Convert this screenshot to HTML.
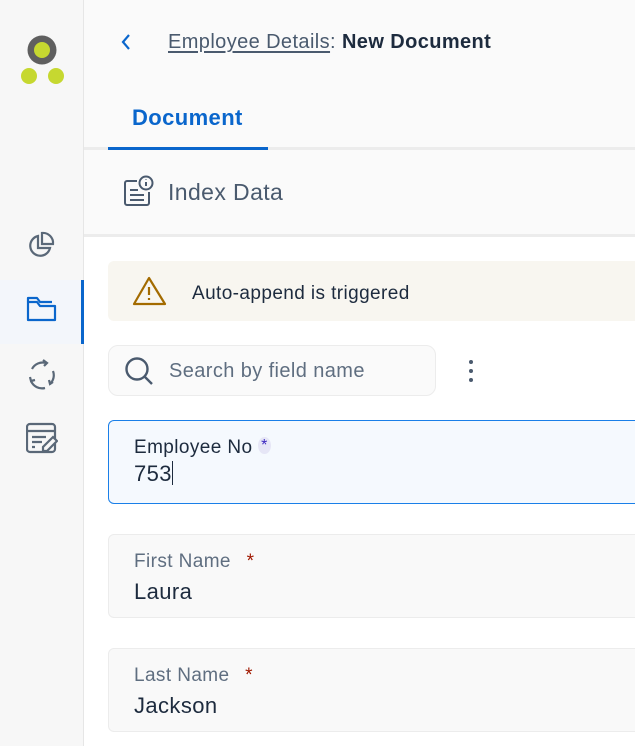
<!DOCTYPE html>
<html><head><meta charset="utf-8"><style>
*{box-sizing:border-box;margin:0;padding:0}
body{width:635px;height:746px;overflow:hidden;background:#fff;font-family:"Liberation Sans",sans-serif;position:relative;color:#1d2b3e;letter-spacing:0.4px}
.side{position:absolute;left:0;top:0;width:84px;height:746px;background:#f7f7f7;border-right:1px solid #e6e6e6}
.abs{position:absolute}
.top{position:absolute;left:84px;top:0;right:0;height:236px;background:#fafafa}
.field{position:absolute;left:108px;width:540px;height:84px;border:1px solid #ececec;border-radius:6px;background:#f9f9f9;padding:16px 0 0 25px}
.lab{font-size:19px;color:#5f6e80}
.val{font-size:22px;color:#1d2b3e;margin-top:6px}
.star{color:#a01800;margin-left:10px}
</style></head><body>
<div class="side">
  <svg class="abs" style="left:20px;top:35px" width="46" height="50"><circle cx="22" cy="15" r="14.5" fill="#5f5f5f"/><circle cx="22" cy="15" r="8" fill="#c6d830"/><circle cx="9" cy="41" r="8" fill="#c6d830"/><circle cx="36" cy="41" r="8" fill="#c6d830"/></svg>
  <svg class="abs" style="left:26px;top:230px" width="32" height="32" fill="none" stroke="#5a6878" stroke-width="2.2"><path d="M12 6a10 10 0 1 0 12 12H12z"/><path d="M16 3a10 10 0 0 1 11 11H16z"/></svg>
  <div class="abs" style="left:0;top:280px;width:84px;height:64px;background:#f3f6fb;border-right:3px solid #0a66cc"></div>
  <svg class="abs" style="left:26px;top:294px" width="32" height="32" fill="none" stroke="#0a66cc" stroke-width="2.2" stroke-linejoin="round"><path d="M2 8v18h27V12H14l-3-4z"/><path d="M2 8V4h9l3 4h12"/></svg>
  <svg class="abs" style="left:26px;top:358px" width="32" height="32" fill="none" stroke="#5a6878" stroke-width="2.2"><path d="M6 11a12 12 0 0 1 14-6"/><path d="M27 13a12 12 0 0 1-3 13"/><path d="M19 30a12 12 0 0 1-14-7"/><path d="M17 2l4 3-3 3M27 24l-3 2-1-4M4 19l1 4 4-1"/></svg>
  <svg class="abs" style="left:26px;top:422px" width="32" height="32" fill="none" stroke="#5a6878" stroke-width="2.2"><rect x="1" y="2" width="28" height="28" rx="3"/><path d="M1 9h28M6 15h14M6 20h10M6 25h3"/><path d="M27 15l4 4-10 10h-4v-4z" fill="#f7f7f7"/></svg>
</div>
<div class="top"></div>
<div class="abs" style="left:84px;top:147px;right:0;height:3px;background:#ececec"></div>
<div class="abs" style="left:108px;top:147px;width:160px;height:3px;background:#0a66cc"></div>
<div class="abs" style="left:84px;top:234px;right:0;height:3px;background:#ececec"></div>
<svg class="abs" style="left:118px;top:32px" width="16" height="20" fill="none" stroke="#0a66cc" stroke-width="2.2"><path d="M11 3l-6 7 6 7"/></svg>
<div class="abs" style="left:168px;top:31px;font-size:20px;color:#4a5a6e"><span style="text-decoration:underline;text-underline-offset:3px">Employee Details</span>: <b style="color:#1d2b3e">New Document</b></div>
<div class="abs" style="left:132px;top:105px;font-size:22px;font-weight:bold;color:#0a66cc">Document</div>
<svg class="abs" style="left:123px;top:175px" width="32" height="34" fill="none" stroke="#4a5a6e" stroke-width="2"><path d="M14 6H4a2 2 0 0 0-2 2v20a2 2 0 0 0 2 2h20a2 2 0 0 0 2-2V17"/><circle cx="23" cy="8" r="6.5"/><path d="M23 7v4M23 4.5v.5M7 15h8M7 20h14M7 25h14"/></svg>
<div class="abs" style="left:168px;top:179px;font-size:23px;color:#4a5a6e">Index Data</div>
<div class="abs" style="left:108px;top:261px;width:540px;height:60px;background:#f8f6f0;border-radius:6px"></div>
<svg class="abs" style="left:132px;top:275px" width="36" height="32" fill="none" stroke="#a36b00" stroke-width="2.2" stroke-linejoin="round"><path d="M17 3L2 29h31z"/><path d="M17 12v8M17 23v2"/></svg>
<div class="abs" style="left:192px;top:283px;font-size:19px;color:#1d2b3e">Auto-append is triggered</div>
<div class="abs" style="left:108px;top:345px;width:328px;height:51px;border:1px solid #ececec;border-radius:10px;background:#fafafa"></div>
<svg class="abs" style="left:124px;top:356px" width="30" height="30" fill="none" stroke="#4a5a6e" stroke-width="2.4"><circle cx="13" cy="13" r="10.5"/><path d="M21 21l7 7"/></svg>
<div class="abs" style="left:169px;top:360px;font-size:20px;color:#5f6e80">Search by field name</div>
<svg class="abs" style="left:466px;top:358px" width="10" height="26" fill="#4a5a6e"><circle cx="5" cy="4" r="2"/><circle cx="5" cy="13" r="2"/><circle cx="5" cy="22" r="2"/></svg>
<div class="field" style="top:420px;border-color:#1a7fe8;background:#f5f9fe"><div class="lab" style="color:#1d2b3e">Employee No <span style="color:#3c28c0;background:#e6e6f6;border-radius:50%;font-size:16px;padding:0 3px;vertical-align:3px">*</span></div><div class="val" style="margin-top:2px">753<span style="display:inline-block;width:1px;height:24px;background:#1d2b3e;vertical-align:-4px"></span></div></div>
<div class="field" style="top:534px"><div class="lab">First Name <span class="star">*</span></div><div class="val">Laura</div></div>
<div class="field" style="top:648px"><div class="lab">Last Name <span class="star">*</span></div><div class="val">Jackson</div></div>
</body></html>
